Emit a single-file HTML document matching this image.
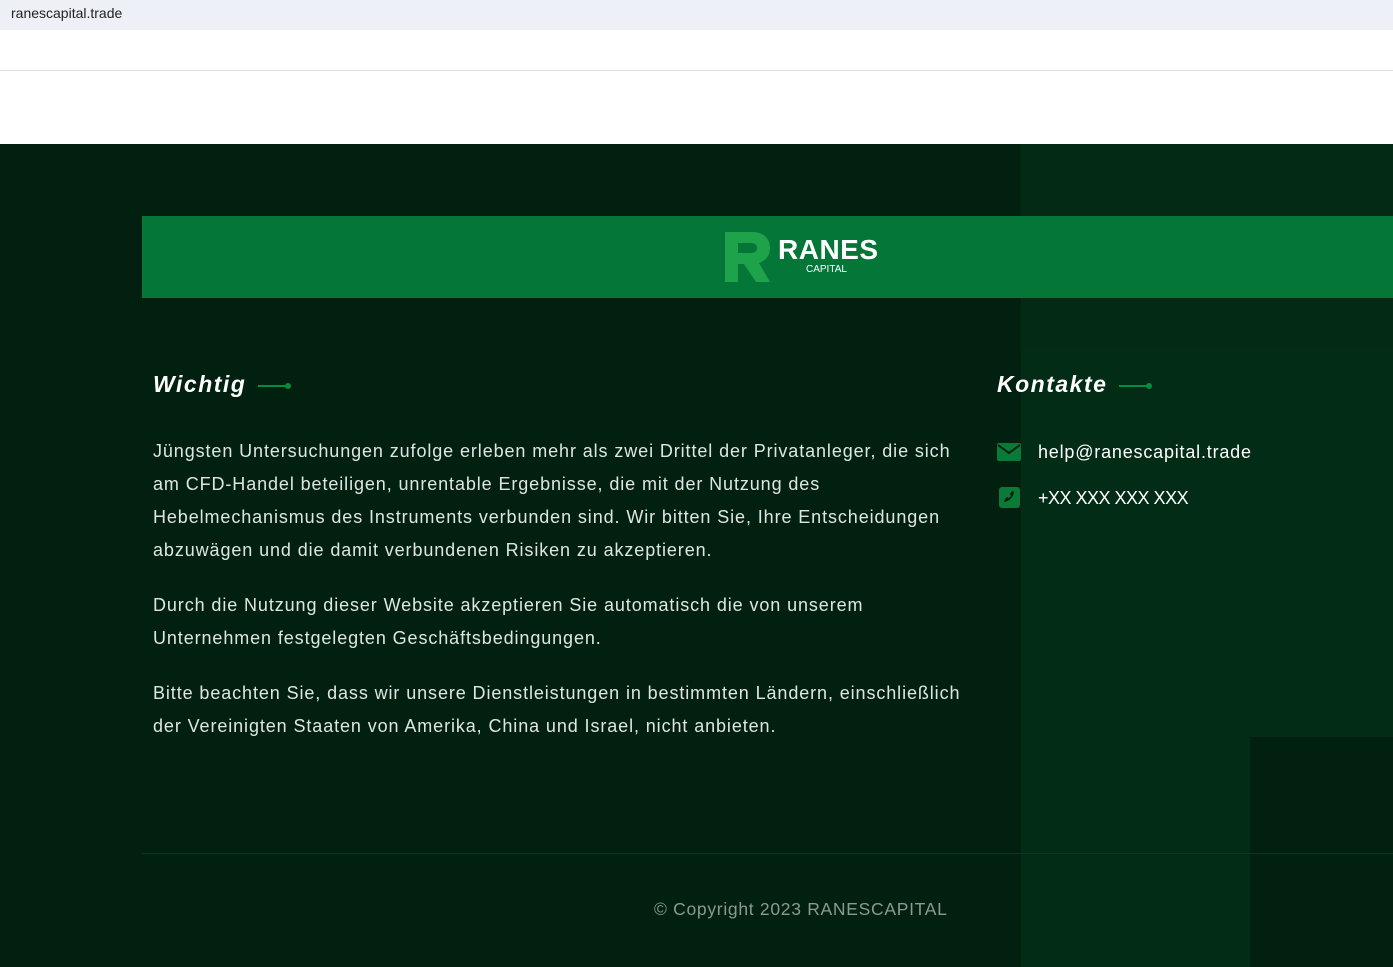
<!DOCTYPE html>
<html><head><meta charset="utf-8"><style>
*{margin:0;padding:0;box-sizing:border-box}
body{width:1393px;height:967px;overflow:hidden;background:#fff;font-family:"Liberation Sans",sans-serif;position:relative}
.top{position:absolute;left:0;top:0;width:1393px;height:30px;background:#eef0f8;font-size:14px;color:#222;padding:5px 11px}
.line{position:absolute;left:0;top:70px;width:1393px;height:1px;background:#e2e2e2}
.foot{position:absolute;left:0;top:144px;width:1393px;height:823px;background:#01200f;overflow:hidden}
.rb{position:absolute;left:1021px;top:0;width:372px;height:823px;background:#032c17}
.rb2{position:absolute;left:1021px;top:0;width:372px;height:203px;background:#022a15}
.tri{position:absolute;left:1250px;top:593px;width:143px;height:230px;background:#01200f}
.band{position:absolute;left:142px;top:72px;width:1251px;height:82px;background:#047637}
.h{position:absolute;font-weight:bold;font-style:italic;font-size:23px;color:#fff;letter-spacing:1.5px}
.h span{display:inline-block;width:30px;height:2px;background:#0a8a3e;vertical-align:middle;margin-left:12px;position:relative}
.h span:after{content:"";position:absolute;right:-3px;top:-2px;width:6px;height:6px;border-radius:50%;background:#0a8a3e}
p{position:absolute;left:153px;width:900px;white-space:nowrap;color:#dfe6e1;font-size:18px;line-height:33px;letter-spacing:0.9px}
.c{position:absolute;left:1038px;color:#fff;font-size:18px;letter-spacing:0.8px}
.sep{position:absolute;left:142px;top:709px;width:1251px;height:1px;background:#0d3520}
.copy{position:absolute;left:654px;top:755px;color:#8a9a90;font-size:17.5px;letter-spacing:0.7px}
</style></head><body>
<div class="top">ranescapital.trade</div>
<div class="line"></div>
<div class="foot">
<div class="rb"></div><div class="rb2"></div><div class="tri"></div>
<div class="band">
<svg style="position:absolute;left:582px;top:16px" width="48" height="50" viewBox="0 0 48 50"><path d="M1 0H28C40 0 46 7 46 16C46 24 41 29 35 31L46 50H32L20 32H14V50H1Z M14 11V21H27C31 21 33 19 33 16C33 13 31 11 27 11Z" fill="#1ea24a" fill-rule="evenodd"/></svg>
<div style="position:absolute;left:636px;top:18px;color:#fff;font-weight:bold;font-size:28px;letter-spacing:0.5px">RANES</div>
<div style="position:absolute;left:664px;top:48px;color:#fff;font-size:10px">CAPITAL</div>
</div>
<div class="h" style="left:153px;top:227px">Wichtig<span></span></div>
<div class="h" style="left:997px;top:227px">Kontakte<span></span></div>
<p style="top:291px">Jüngsten Untersuchungen zufolge erleben mehr als zwei Drittel der Privatanleger, die sich<br>am CFD-Handel beteiligen, unrentable Ergebnisse, die mit der Nutzung des<br>Hebelmechanismus des Instruments verbunden sind. Wir bitten Sie, Ihre Entscheidungen<br>abzuwägen und die damit verbundenen Risiken zu akzeptieren.</p>
<p style="top:445px">Durch die Nutzung dieser Website akzeptieren Sie automatisch die von unserem<br>Unternehmen festgelegten Geschäftsbedingungen.</p>
<p style="top:533px">Bitte beachten Sie, dass wir unsere Dienstleistungen in bestimmten Ländern, einschließlich<br>der Vereinigten Staaten von Amerika, China und Israel, nicht anbieten.</p>
<svg style="position:absolute;left:997px;top:299px" width="24" height="18" viewBox="0 0 24 18"><rect width="24" height="18" rx="2" fill="#0a7a38"/><path d="M1 2L12 10L23 2" stroke="#01200f" stroke-width="2" fill="none"/></svg>
<div class="c" style="top:298px">help@ranescapital.trade</div>
<svg style="position:absolute;left:999px;top:343px" width="21" height="21" viewBox="0 0 21 21"><rect width="21" height="21" rx="3" fill="#0a7a38"/><path d="M5 15C9 15 15 10 15 5L13 4L11 7L12 9L10 11L8 10L6 12Z" fill="#01200f"/></svg>
<div class="c" style="top:344px;letter-spacing:-0.5px">+XX XXX XXX XXX</div>
<div class="sep"></div>
<div class="copy">© Copyright 2023 RANESCAPITAL</div>
</div>
</body></html>
